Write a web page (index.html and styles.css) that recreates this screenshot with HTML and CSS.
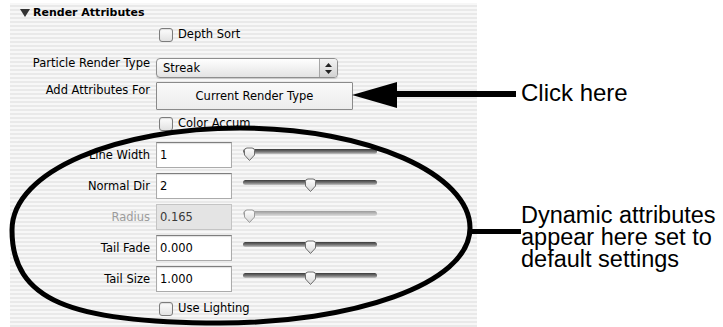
FILE: index.html
```html
<!DOCTYPE html>
<html lang="en">
<head>
  <meta charset="UTF-8" />
  <meta name="viewport" content="width=device-width, initial-scale=1.0" />
  <title>Render Attributes</title>
  <link rel="stylesheet" href="styles.css">
</head>
<body>
  <svg class="defs" width="0" height="0" aria-hidden="true">
    <defs>
      <linearGradient id="thumbFill" x1="0" y1="0" x2="0" y2="1">
        <stop offset="0" stop-color="#ffffff" />
        <stop offset="1" stop-color="#d6d6d6" />
      </linearGradient>
    </defs>
  </svg>

  <div class="page">
    <div class="panel">
      <div class="section-head"><span class="twisty"></span>Render Attributes</div>

      <div class="row row-check row-depth">
        <span class="lbl"></span>
        <label class="check"><span class="box"></span>Depth Sort</label>
      </div>

      <div class="row row-type">
        <span class="lbl">Particle Render Type</span>
        <div class="popup">
          <span class="popup-val">Streak</span>
          <span class="popup-arrows">
            <svg width="7" height="11" viewBox="0 0 7 11">
              <path d="M3.5 0 L7 4 H0 Z M0 7 H7 L3.5 11 Z" fill="#222" />
            </svg>
          </span>
        </div>
      </div>

      <div class="row row-add">
        <span class="lbl">Add Attributes For</span>
        <button class="btn" type="button">Current Render Type</button>
      </div>

      <div class="row row-check row-accum">
        <span class="lbl"></span>
        <label class="check"><span class="box"></span>Color Accum</label>
      </div>

      <div class="fields">
        <div class="row field">
          <span class="lbl">Line Width</span>
          <span class="input">1</span>
          <div class="slider">
            <span class="track"></span>
            <svg class="thumb" style="left:0px" width="13" height="15" viewBox="0 0 13 15"><path d="M1.5 3.5 Q1.5 1 4 1 H9 Q11.5 1 11.5 3.5 V8 L6.5 13.5 L1.5 8 Z" /></svg>
          </div>
        </div>
        <div class="row field">
          <span class="lbl">Normal Dir</span>
          <span class="input">2</span>
          <div class="slider">
            <span class="track"></span>
            <svg class="thumb" style="left:61px" width="13" height="15" viewBox="0 0 13 15"><path d="M1.5 3.5 Q1.5 1 4 1 H9 Q11.5 1 11.5 3.5 V8 L6.5 13.5 L1.5 8 Z" /></svg>
          </div>
        </div>
        <div class="row field disabled">
          <span class="lbl">Radius</span>
          <span class="input">0.165</span>
          <div class="slider">
            <span class="track"></span>
            <svg class="thumb" style="left:0px" width="13" height="15" viewBox="0 0 13 15"><path d="M1.5 3.5 Q1.5 1 4 1 H9 Q11.5 1 11.5 3.5 V8 L6.5 13.5 L1.5 8 Z" /></svg>
          </div>
        </div>
        <div class="row field">
          <span class="lbl">Tail Fade</span>
          <span class="input">0.000</span>
          <div class="slider">
            <span class="track"></span>
            <svg class="thumb" style="left:61px" width="13" height="15" viewBox="0 0 13 15"><path d="M1.5 3.5 Q1.5 1 4 1 H9 Q11.5 1 11.5 3.5 V8 L6.5 13.5 L1.5 8 Z" /></svg>
          </div>
        </div>
        <div class="row field">
          <span class="lbl">Tail Size</span>
          <span class="input">1.000</span>
          <div class="slider">
            <span class="track"></span>
            <svg class="thumb" style="left:61px" width="13" height="15" viewBox="0 0 13 15"><path d="M1.5 3.5 Q1.5 1 4 1 H9 Q11.5 1 11.5 3.5 V8 L6.5 13.5 L1.5 8 Z" /></svg>
          </div>
        </div>
      </div>

      <div class="row row-check row-light">
        <span class="lbl"></span>
        <label class="check"><span class="box"></span>Use Lighting</label>
      </div>
    </div>

    <div class="notes">
      <p class="note note-click">Click here</p>
      <p class="note note-dyn">Dynamic attributes<br>appear here set to<br>default settings</p>
    </div>

    <!-- callout marks drawn over the panel -->
    <svg class="marks" width="723" height="327" viewBox="0 0 723 327">
      <path d="M12 230 C12 170 120 128 240 128 C370 128 470 175 470 228 C470 285 350 323 220 323 C70 323 12 300 12 230 Z" fill="none" stroke="#000" stroke-width="5" />
      <path d="M468 231.5 H521" stroke="#000" stroke-width="5" />
      <path d="M392 94 H516" stroke="#000" stroke-width="6" />
      <polygon points="352,95 397,82 397,108" fill="#000" />
    </svg>
  </div>
</body>
</html>
```

FILE: styles.css
```css
body {
  margin: 0;
  background: #fff;
  font-family: "DejaVu Sans", sans-serif;
  font-size: 11.5px;
  color: #000;
}
.defs {
  position: absolute;
}
.page {
  position: relative;
  width: 723px;
  height: 327px;
  display: flex;
  overflow: hidden;
}
.panel {
  width: 467px;
  margin: 3px 0 0 10px;
  background: repeating-linear-gradient(#f7f7f7 0 2px, #e9e9e9 2px 4px);
  display: flex;
  flex-direction: column;
}
.section-head {
  display: flex;
  align-items: center;
  height: 20px;
  line-height: 20px;
  padding-left: 10px;
  font-size: 11px;
  font-weight: bold;
}
.twisty {
  width: 0;
  height: 0;
  border-left: 5px solid transparent;
  border-right: 5px solid transparent;
  border-top: 8px solid #333;
  margin-right: 3px;
}
.row {
  display: flex;
  align-items: center;
}
.lbl {
  flex: 0 0 140px;
  margin-right: 6px;
  text-align: right;
  white-space: nowrap;
}
.row-check {
  height: 15px;
  line-height: 15px;
}
.row-depth {
  margin-top: 4px;
}
.row-accum {
  margin-top: 6px;
}
.row-light {
  margin-top: 9px;
}
.check {
  display: flex;
  align-items: center;
  margin-left: 3px;
}
.box {
  width: 14px;
  height: 14px;
  box-sizing: border-box;
  border: 1px solid #7c7c7c;
  border-radius: 3px;
  background: linear-gradient(#fdfdfd, #e2e2e2);
  box-shadow: inset 0 1px 1px rgba(0, 0, 0, 0.12);
  margin-right: 5px;
}

.row-type {
  margin-top: 16px;
  height: 20px;
}
.row-type .lbl {
  align-self: flex-start;
  line-height: 14px;
  margin-top: -2px;
}
.popup {
  width: 182px;
  height: 20px;
  box-sizing: border-box;
  display: flex;
  border: 1px solid #8e8e8e;
  border-radius: 4px;
  background: linear-gradient(#ffffff, #f1f1f1 50%, #e3e3e3);
  box-shadow: 0 1px 1px rgba(0, 0, 0, 0.15);
}
.popup-val {
  flex: 1;
  padding-left: 6px;
  line-height: 18px;
}
.popup-arrows {
  width: 17px;
  display: flex;
  align-items: center;
  justify-content: center;
  border-left: 1px solid #a6a6a6;
  border-radius: 0 3px 3px 0;
  background: linear-gradient(#f4f4f4, #d2d2d2);
}

.row-add {
  margin-top: 4px;
  height: 28px;
}
.row-add .lbl {
  align-self: flex-start;
  line-height: 14px;
  margin-top: 1px;
}
.btn {
  width: 197px;
  height: 28px;
  padding: 0;
  border: 1px solid #8a8a8a;
  border-radius: 1px;
  background: linear-gradient(#f9f9f9, #ececec);
  font-family: inherit;
  font-size: 11.5px;
  color: #000;
}

.fields {
  margin-top: 11px;
  display: flex;
  flex-direction: column;
  gap: 5px;
}
.field {
  height: 26px;
}
.input {
  width: 76px;
  height: 26px;
  box-sizing: border-box;
  padding-left: 3px;
  line-height: 24px;
  background: #fff;
  border: 1px solid #ababab;
  border-top-color: #7e7e7e;
  box-shadow: inset 0 1px 1px rgba(0, 0, 0, 0.12);
}
.slider {
  position: relative;
  align-self: flex-start;
  width: 134px;
  height: 15px;
  margin: 5px 0 0 11px;
  padding-top: 2px;
  box-sizing: border-box;
}
.track {
  display: block;
  height: 5px;
  border-radius: 3px;
  background: linear-gradient(#3a3a3a, #7e7e7e 60%, #c4c4c4);
}
.thumb {
  position: absolute;
  top: 0;
}
.thumb path {
  fill: url(#thumbFill);
  stroke: #6c6c6c;
  stroke-width: 1;
}
.disabled .lbl {
  color: #9c9c9c;
}
.disabled .input {
  background: #e4e4e4;
  border-color: #c4c4c4;
  color: #3a3a3a;
  box-shadow: none;
}
.disabled .track {
  background: linear-gradient(#9a9a9a, #c2c2c2 60%, #dedede);
}
.disabled .thumb path {
  stroke: #9a9a9a;
}

.notes {
  margin-left: 44px;
  font-family: "Liberation Sans", Arial, sans-serif;
  font-size: 24px;
  color: #000;
}
.note {
  margin: 0;
}
.note-click {
  margin-top: 81px;
  line-height: 24px;
}
.note-dyn {
  margin-top: 99px;
  font-size: 23.5px;
  line-height: 22px;
  white-space: nowrap;
}
.marks {
  position: absolute;
  top: 0;
  left: 0;
  pointer-events: none;
}
```
